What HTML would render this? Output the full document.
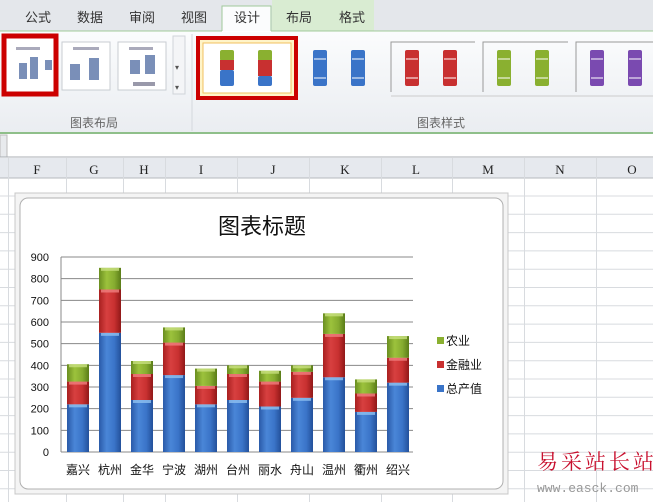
<!DOCTYPE html>
<html><head><meta charset="utf-8"><style>
html,body{margin:0;padding:0;width:653px;height:502px;overflow:hidden;background:#fff;font-family:"Liberation Sans","Noto Sans CJK SC",sans-serif}
</style></head><body>
<svg id="s" width="653" height="502" xmlns="http://www.w3.org/2000/svg" font-family="'Liberation Sans','Noto Sans CJK SC',sans-serif">
<defs>
<linearGradient id="bl" x1="0" x2="1"><stop offset="0" stop-color="#2a5aa8"/><stop offset=".35" stop-color="#4a86d8"/><stop offset=".7" stop-color="#3a74c8"/><stop offset="1" stop-color="#23509a"/></linearGradient>
<linearGradient id="rd" x1="0" x2="1"><stop offset="0" stop-color="#a82020"/><stop offset=".35" stop-color="#d84040"/><stop offset=".7" stop-color="#c83030"/><stop offset="1" stop-color="#901818"/></linearGradient>
<linearGradient id="gr" x1="0" x2="1"><stop offset="0" stop-color="#6a8e20"/><stop offset=".35" stop-color="#9cc23c"/><stop offset=".7" stop-color="#86ac30"/><stop offset="1" stop-color="#5a7c18"/></linearGradient>
<linearGradient id="rib" x1="0" y1="0" x2="0" y2="1"><stop offset="0" stop-color="#fbfcfd"/><stop offset="1" stop-color="#eaedf1"/></linearGradient>
</defs>
<rect x="0" y="0" width="653" height="31" fill="#e4e7eb"/>
<rect x="272" y="0" width="102" height="31" fill="#d9ecd2"/>
<g font-size="13" fill="#333">
<text x="25" y="22">公式</text><text x="77" y="22">数据</text><text x="129" y="22">审阅</text><text x="181" y="22">视图</text><text x="286" y="22">布局</text><text x="339" y="22">格式</text>
</g>
<path d="M222 31 V6 H271 V31" fill="#fbfcfd" stroke="#9fc89a"/>
<text x="234" y="22" font-size="13" fill="#333">设计</text>
<line x1="0" y1="31" x2="222" y2="31" stroke="#9fc89a"/><line x1="271" y1="31" x2="653" y2="31" stroke="#9fc89a"/>
<rect x="0" y="32" width="653" height="101" fill="url(#rib)"/>
<line x1="0" y1="133" x2="653" y2="133" stroke="#8fbf8a" stroke-width="2"/>
<line x1="192" y1="34" x2="192" y2="131" stroke="#d4d8dd"/>
<text x="70" y="127" font-size="12" fill="#666">图表布局</text>
<text x="417" y="127" font-size="12" fill="#666">图表样式</text>
<rect x="4" y="36" width="52" height="58" fill="#fff" stroke="#c00" stroke-width="5"/>
<rect x="62" y="42" width="48" height="48" fill="#fff" stroke="#c8ccd2"/>
<rect x="118" y="42" width="48" height="48" fill="#fff" stroke="#c8ccd2"/>
<g fill="#7a8fb8"><rect x="16" y="47" width="24" height="3" fill="#aab"/><rect x="19" y="63" width="8" height="16"/><rect x="30" y="57" width="8" height="22"/><rect x="45" y="60" width="7" height="10"/>
<rect x="73" y="47" width="26" height="3" fill="#aab"/><rect x="70" y="64" width="10" height="16"/><rect x="89" y="58" width="10" height="22"/>
<rect x="129" y="47" width="24" height="3" fill="#aab"/><rect x="130" y="60" width="10" height="14"/><rect x="145" y="55" width="10" height="19"/><rect x="133" y="82" width="22" height="4" fill="#99a"/></g>
<rect x="173" y="36" width="12" height="58" fill="#f4f5f7" stroke="#d0d4d9"/>
<text x="175" y="70" font-size="8" fill="#555">▾</text><text x="175" y="90" font-size="8" fill="#555">▾</text>
<rect x="198" y="38" width="98" height="60" fill="#fff4c8" stroke="#c00" stroke-width="4"/>
<rect x="203" y="43" width="88" height="50" fill="#fff" stroke="#f0c060"/>
<path d="M391 92 V42 H475" fill="none" stroke="#999"/><path d="M483 92 V42 H568" fill="none" stroke="#999"/><path d="M576 92 V42 H653" fill="none" stroke="#999"/>
<line x1="391" y1="96" x2="653" y2="96" stroke="#ccc"/>
<g id="sty"></g>
<rect x="0" y="135" width="653" height="22" fill="#fff"/>
<rect x="0" y="135" width="7" height="22" fill="#e8eaed" stroke="#bbb"/>
<line x1="0" y1="157" x2="653" y2="157" stroke="#a8adb3"/>
<rect x="0" y="158" width="653" height="20" fill="#e6e9ee"/>
<line x1="0" y1="178" x2="653" y2="178" stroke="#b5b9be"/>
<g id="grid" stroke="#d8dbdf"></g>
<g font-family="'Liberation Serif',serif" font-size="13" fill="#222" text-anchor="middle">
<text x="37" y="174">F</text><text x="94" y="174">G</text><text x="144" y="174">H</text><text x="201" y="174">I</text><text x="273" y="174">J</text><text x="345" y="174">K</text><text x="416" y="174">L</text><text x="488" y="174">M</text><text x="560" y="174">N</text><text x="632" y="174">O</text>
</g>
<rect x="15" y="193" width="493" height="301" fill="#f4f4f4" stroke="#c8c8c8"/>
<rect x="20" y="198" width="483" height="291" rx="8" fill="#fff" stroke="#b0b0b0"/>
<text x="262" y="234" font-size="22" text-anchor="middle" fill="#111">图表标题</text>
<g id="ch"></g>
<g font-size="12" fill="#111">
<rect x="437" y="337" width="7" height="7" fill="#8ab030"/><text x="446" y="345">农业</text>
<rect x="437" y="361" width="7" height="7" fill="#c83030"/><text x="446" y="369">金融业</text>
<rect x="437" y="385" width="7" height="7" fill="#3a74c8"/><text x="446" y="393">总产值</text>
</g>
<text x="537" y="469" font-size="21" fill="#c8102e" font-family="'Noto Serif CJK SC',serif" letter-spacing="3">易采站长站</text>
<text x="537" y="492" font-size="13" fill="#999" font-family="'Liberation Mono',monospace">www.easck.com</text>
</svg>
<script>
var ns="http://www.w3.org/2000/svg";
function el(p,t,a,tx){var e=document.createElementNS(ns,t);for(var k in a)e.setAttribute(k,a[k]);if(tx!==undefined)e.textContent=String(tx);p.appendChild(e);return e;}
var g=document.getElementById('grid');
[8,66,123,165,237,309,381,452,524,596].forEach(function(x){el(g,'line',{x1:x+.5,y1:158,x2:x+.5,y2:502});});
for(var y=196;y<502;y+=18.3)el(g,'line',{x1:0,y1:y,x2:653,y2:y});
var st=document.getElementById('sty');
var cols=[['#6a9e30'],['#3a74c8'],['#c83030'],['#8ab030'],['#7a4ab0']];
var gx=[[227,265],[320,358],[412,450],[504,542],[597,635]];
gx.forEach(function(p,i){p.forEach(function(x,j){
 if(i==0){el(st,'rect',{x:x-7,y:50,width:14,height:11,fill:'#8ab030',rx:2});el(st,'rect',{x:x-7,y:60,width:14,height:j?16:10,fill:'#c83030'});el(st,'rect',{x:x-7,y:j?76:70,width:14,height:j?10:16,fill:'#3a74c8',rx:2});}
 else{el(st,'rect',{x:x-7,y:50,width:14,height:36,fill:cols[i][0],rx:2});el(st,'rect',{x:x-6,y:58,width:12,height:2,fill:'#fff',opacity:.5});el(st,'rect',{x:x-6,y:77,width:12,height:2,fill:'#fff',opacity:.5});}
});});
var c=document.getElementById('ch');
var y0=452,k=195/900;
for(var v=0;v<=900;v+=100){var yy=y0-v*k;el(c,'line',{x1:61,y1:yy,x2:413,y2:yy,stroke:'#888'});el(c,'text',{x:49,y:yy+4,'font-size':11,'text-anchor':'end',fill:'#111'},v);}
el(c,'line',{x1:61,y1:257,x2:61,y2:452,stroke:'#888'});
var d=[['嘉兴',220,325,405],['杭州',550,750,850],['金华',240,360,420],['宁波',355,505,575],['湖州',220,305,385],['台州',240,360,400],['丽水',210,325,375],['舟山',250,370,400],['温州',345,545,640],['衢州',185,270,335],['绍兴',320,435,535]];
d.forEach(function(r,i){var cx=78+i*32,x=cx-11;
 var segs=[[0,r[1],'bl','#8fc0f0'],[r[1],r[2],'rd','#f08080'],[r[2],r[3],'gr','#c8e080']];
 segs.forEach(function(s){var t=y0-s[1]*k,b=y0-s[0]*k;el(c,'rect',{x:x,y:t,width:22,height:b-t,fill:'url(#'+s[2]+')'});el(c,'rect',{x:x+2,y:t,width:18,height:3,fill:s[3],opacity:.8});});
 el(c,'text',{x:cx,y:474,'font-size':12,'text-anchor':'middle',fill:'#111'},r[0]);
});
</script>
</body></html>
